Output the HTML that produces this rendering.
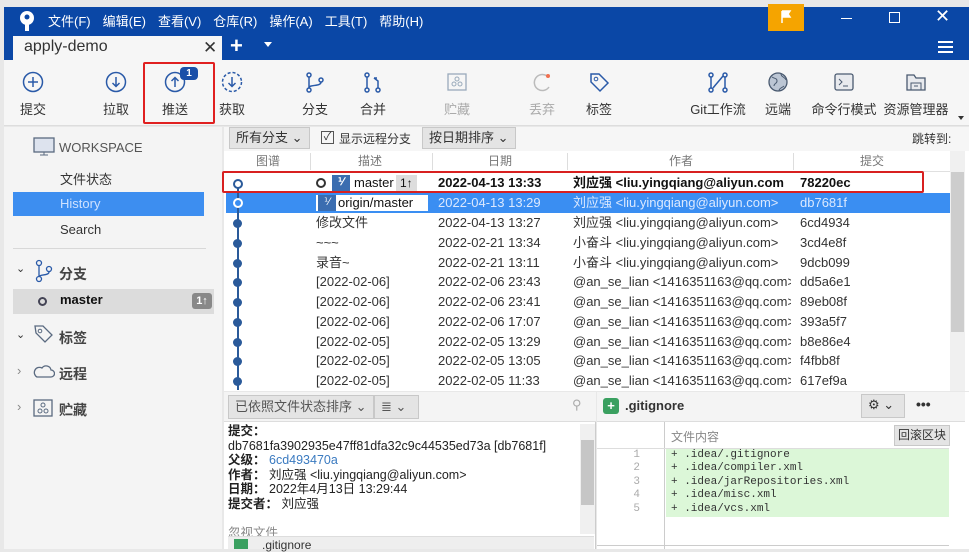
<!DOCTYPE html>
<html><head><meta charset="utf-8"><style>
*{box-sizing:border-box;margin:0;padding:0}
body{width:969px;height:549px;overflow:hidden;background:#e8e8e8;font-family:"Liberation Sans","Noto Sans CJK SC",sans-serif;font-size:13px;color:#333;position:relative}
.a{position:absolute}
.title{left:4px;top:7px;width:965px;height:53px;background:#0a47a6}
.menu span{color:#fff;font-size:13px;margin-right:12px}
.tb{left:4px;top:60px;width:965px;height:66px;background:#f6f6f6;border-bottom:1px solid #ddd}
.tool{position:absolute;top:10px;text-align:center;font-size:13px;color:#333;width:60px}
.tool svg{display:block;margin:0 auto 6px}
.side{left:4px;top:127px;width:218px;height:422px;background:#f4f4f4}
.main{left:224px;top:127px;width:745px;height:265px;background:#fff}
.row{position:absolute;left:226px;width:724px;height:20px;font-size:13px;line-height:20px;white-space:nowrap}
.row span{position:absolute}
.btn{position:absolute;background:#e4e4e4;border:1px solid #c8c8c8;height:22px;line-height:20px;padding:0 6px;font-size:13px}
.mono{font-family:"Liberation Mono",monospace;font-size:11px}
.dot{left:7px;top:6px;width:9px;height:9px;border-radius:50%;background:#2a5a9a}
</style></head><body>
<div class="a title"></div>
<svg class="a" style="left:18px;top:10px" width="18" height="22" viewBox="0 0 18 22"><circle cx="9" cy="8" r="7" fill="#fff"/><rect x="7" y="10" width="4" height="11" fill="#fff"/><circle cx="9" cy="7" r="2.5" fill="#0a47a6"/></svg>
<div class="a menu" style="left:48px;top:11px"><span>文件(F)</span><span>编辑(E)</span><span>查看(V)</span><span>仓库(R)</span><span>操作(A)</span><span>工具(T)</span><span>帮助(H)</span></div>
<div class="a" style="left:768px;top:4px;width:36px;height:27px;background:#f5a400"></div>
<svg class="a" style="left:780px;top:10px" width="12" height="14"><path d="M2 1v12M2 1h8l-2 3 2 3H2" stroke="#fff" stroke-width="1.5" fill="#fff"/></svg>
<div class="a" style="left:841px;top:18px;width:11px;height:1px;background:#fff"></div>
<div class="a" style="left:889px;top:12px;width:11px;height:11px;border:1.5px solid #fff"></div>
<div class="a" style="left:935px;top:6px;color:#fff;font-size:18px">✕</div>
<div class="a" style="left:938px;top:41px;width:15px;height:2px;background:#fff;box-shadow:0 5px #fff,0 10px #fff"></div>
<div class="a" style="left:13px;top:36px;width:209px;height:24px;background:#f6f6f6"></div>
<div class="a" style="left:24px;top:38px;font-size:16px;color:#333">apply-demo</div>
<div class="a" style="left:203px;top:38px;font-size:17px;color:#333">✕</div>
<div class="a" style="left:230px;top:33px;font-size:22px;color:#fff;font-weight:bold">+</div>
<div class="a" style="left:264px;top:42px;border:4px solid transparent;border-top:5px solid #fff"></div>
<div class="a tb"></div>
<div class="tool" style="left:3px;top:71px"><svg width="22" height="22"><circle cx="11" cy="11" r="9.5" fill="none" stroke="#2a5aa8" stroke-width="1.5"/><path d="M11 6v10M6 11h10" stroke="#2a5aa8" stroke-width="1.5"/></svg>提交</div>
<div class="tool" style="left:86px;top:71px"><svg width="22" height="22"><circle cx="11" cy="11" r="9.5" fill="none" stroke="#2a5aa8" stroke-width="1.5"/><path d="M11 6v9M7.5 12l3.5 3.5 3.5-3.5" fill="none" stroke="#2a5aa8" stroke-width="1.5"/></svg>拉取</div>
<div class="a" style="left:143px;top:62px;width:72px;height:62px;border:2px solid #e02020;border-radius:2px"></div>
<div class="tool" style="left:145px;top:71px"><svg width="22" height="22"><circle cx="11" cy="11" r="9.5" fill="none" stroke="#2a5aa8" stroke-width="1.5"/><path d="M11 16V7M7.5 10l3.5-3.5 3.5 3.5" fill="none" stroke="#2a5aa8" stroke-width="1.5"/></svg>推送</div>
<div class="a" style="left:180px;top:67px;width:18px;height:13px;background:#1a4fa8;border-radius:4px;color:#fff;font-size:10px;font-weight:bold;text-align:center;line-height:13px">1</div>
<div class="tool" style="left:202px;top:71px"><svg width="22" height="22"><circle cx="11" cy="11" r="9.5" fill="none" stroke="#2a5aa8" stroke-width="1.5" stroke-dasharray="3 2"/><path d="M11 6v9M7.5 12l3.5 3.5 3.5-3.5" fill="none" stroke="#2a5aa8" stroke-width="1.5"/></svg>获取</div>
<div class="tool" style="left:285px;top:71px"><svg width="22" height="22"><circle cx="5" cy="4" r="2" fill="none" stroke="#2a5aa8" stroke-width="1.5"/><circle cx="5" cy="19" r="2" fill="none" stroke="#2a5aa8" stroke-width="1.5"/><circle cx="17" cy="9" r="2" fill="none" stroke="#2a5aa8" stroke-width="1.5"/><path d="M5 6v11M17 11c0 5-12 2-12 6" fill="none" stroke="#2a5aa8" stroke-width="1.5"/></svg>分支</div>
<div class="tool" style="left:343px;top:71px"><svg width="22" height="22"><circle cx="5" cy="4" r="2" fill="none" stroke="#2a5aa8" stroke-width="1.5"/><circle cx="5" cy="19" r="2" fill="none" stroke="#2a5aa8" stroke-width="1.5"/><circle cx="16" cy="19" r="2" fill="none" stroke="#2a5aa8" stroke-width="1.5"/><path d="M5 6v11M16 17v-7l-4-3M12 7h3" fill="none" stroke="#2a5aa8" stroke-width="1.5"/></svg>合并</div>
<div class="tool" style="left:427px;top:71px;color:#aaa"><svg width="22" height="22"><rect x="2" y="3" width="18" height="16" fill="none" stroke="#9ab" stroke-width="1.3"/><circle cx="11" cy="8" r="2" fill="none" stroke="#9ab"/><circle cx="8" cy="13" r="2" fill="none" stroke="#9ab"/><circle cx="14" cy="13" r="2" fill="none" stroke="#9ab"/></svg>贮藏</div>
<div class="tool" style="left:512px;top:71px;color:#aaa"><svg width="22" height="22"><path d="M16 5A8 8 0 1 0 18 16" fill="none" stroke="#bbb" stroke-width="1.5"/><circle cx="17" cy="5" r="2" fill="#f07050"/></svg>丢弃</div>
<div class="tool" style="left:569px;top:71px"><svg width="22" height="22"><path d="M3 3h8l9 9-8 8-9-9z" fill="none" stroke="#2a5aa8" stroke-width="1.5"/><circle cx="8" cy="8" r="1.8" fill="none" stroke="#2a5aa8"/></svg>标签</div>
<div class="tool" style="left:683px;top:71px;width:70px"><svg width="22" height="22"><circle cx="4" cy="4" r="2" fill="none" stroke="#2a5aa8" stroke-width="1.5"/><circle cx="4" cy="19" r="2" fill="none" stroke="#2a5aa8" stroke-width="1.5"/><circle cx="18" cy="4" r="2" fill="none" stroke="#2a5aa8" stroke-width="1.5"/><circle cx="18" cy="19" r="2" fill="none" stroke="#2a5aa8" stroke-width="1.5"/><path d="M4 6v11M18 6v11M6 17C10 12 12 10 16 5" fill="none" stroke="#2a5aa8" stroke-width="1.5"/></svg>Git工作流</div>
<div class="tool" style="left:748px;top:71px"><svg width="22" height="22"><circle cx="11" cy="11" r="9" fill="#bcc6d4" stroke="#4a5a70" stroke-width="1.3"/><path d="M5 6c3 2 5 1 5 4s-3 2-3 5M14 3c0 3 4 3 5 6M12 20c0-3 3-3 5-5" fill="none" stroke="#4a5a70"/></svg>远端</div>
<div class="tool" style="left:810px;top:71px;width:68px"><svg width="22" height="22"><rect x="2" y="3" width="18" height="16" rx="2" fill="#e8eaee" stroke="#4a5a70" stroke-width="1.3"/><path d="M6 8l3 3-3 3M10 15h5" fill="none" stroke="#4a5a70"/></svg>命令行模式</div>
<div class="tool" style="left:881px;top:71px;width:70px"><svg width="22" height="22"><path d="M2 4h7l2 3h9v12H2z" fill="#e8eaee" stroke="#4a5a70" stroke-width="1.3"/><path d="M6 19v-7h10v7M9 15h4" fill="none" stroke="#4a5a70"/></svg>资源管理器</div>
<div class="a" style="left:958px;top:116px;border:3px solid transparent;border-top:4px solid #333"></div>

<div class="a side"></div>
<svg class="a" style="left:33px;top:137px" width="22" height="20"><rect x="1" y="1" width="20" height="14" fill="#dde3ee" stroke="#5a6a80" stroke-width="1.3"/><path d="M7 18h8M11 15v3" stroke="#5a6a80"/></svg>
<div class="a" style="left:59px;top:140px;font-size:13px;color:#555">WORKSPACE</div>
<div class="a" style="left:60px;top:169px">文件状态</div>
<div class="a" style="left:13px;top:192px;width:191px;height:24px;background:#3d8ef0"></div>
<div class="a" style="left:60px;top:196px;color:#cfe2ff">History</div>
<div class="a" style="left:60px;top:222px">Search</div>
<div class="a" style="left:13px;top:248px;width:193px;height:1px;background:#d8d8d8"></div>
<div class="a" style="left:16px;top:262px;font-size:11px">⌄</div>
<svg class="a" style="left:33px;top:259px" width="20" height="24"><circle cx="6" cy="4" r="2.5" fill="none" stroke="#2a5aa8" stroke-width="1.3"/><circle cx="6" cy="20" r="2.5" fill="none" stroke="#2a5aa8" stroke-width="1.3"/><circle cx="16" cy="10" r="2.5" fill="none" stroke="#2a5aa8" stroke-width="1.3"/><path d="M6 7v10M16 13c0 4-10 2-10 5" fill="none" stroke="#2a5aa8" stroke-width="1.3"/></svg>
<div class="a" style="left:59px;top:264px;font-size:14px;font-weight:bold;color:#444">分支</div>
<div class="a" style="left:13px;top:289px;width:201px;height:25px;background:#dcdcdc"></div>
<div class="a" style="left:38px;top:297px;width:9px;height:9px;border:2px solid #445;border-radius:50%"></div>
<div class="a" style="left:60px;top:292px;font-weight:bold;color:#111">master</div>
<div class="a" style="left:192px;top:293px;width:20px;height:16px;background:#888;border-radius:3px;color:#fff;font-size:11px;text-align:center;line-height:16px;font-weight:bold">1↑</div>
<div class="a" style="left:16px;top:328px;font-size:11px">⌄</div>
<svg class="a" style="left:33px;top:324px" width="22" height="22"><path d="M2 2h8l9 9-7 7-9-9z" fill="none" stroke="#5a6a80" stroke-width="1.3"/><circle cx="7" cy="7" r="1.8" fill="none" stroke="#5a6a80"/></svg>
<div class="a" style="left:59px;top:328px;font-size:14px;font-weight:bold;color:#444">标签</div>
<div class="a" style="left:17px;top:363px;color:#888;font-size:13px">›</div>
<svg class="a" style="left:33px;top:364px" width="22" height="14"><path d="M4 13h14a3 3 0 0 0 0-7 5 5 0 0 0-9-2A4 4 0 0 0 4 13z" fill="none" stroke="#5a6a80" stroke-width="1.3"/></svg>
<div class="a" style="left:59px;top:364px;font-size:14px;font-weight:bold;color:#444">远程</div>
<div class="a" style="left:17px;top:399px;color:#888;font-size:13px">›</div>
<svg class="a" style="left:33px;top:399px" width="20" height="18"><rect x="1" y="1" width="18" height="16" fill="none" stroke="#5a6a80" stroke-width="1.3"/><circle cx="10" cy="6" r="2" fill="none" stroke="#5a6a80"/><circle cx="7" cy="12" r="2" fill="none" stroke="#5a6a80"/><circle cx="13" cy="12" r="2" fill="none" stroke="#5a6a80"/></svg>
<div class="a" style="left:59px;top:400px;font-size:14px;font-weight:bold;color:#444">贮藏</div>

<div class="a" style="left:224px;top:127px;width:745px;height:24px;background:#f6f6f6"></div>
<div class="btn" style="left:229px;top:127px">所有分支 ⌄</div>
<div class="a" style="left:321px;top:131px;width:13px;height:13px;border:1px solid #555;font-size:11px;line-height:11px;text-align:center">✓</div>
<div class="a" style="left:339px;top:130px;font-size:12px">显示远程分支</div>
<div class="btn" style="left:422px;top:127px">按日期排序 ⌄</div>
<div class="a" style="left:912px;top:130px;font-size:12px">跳转到:</div>
<div class="a main" style="top:151px;height:240px"></div>
<div class="a" style="left:226px;top:151px;width:724px;height:21px;background:#fff;border-bottom:1px solid #e0e0e0;color:#777;font-size:12px;line-height:20px">
<span class="a" style="left:30px">图谱</span><span class="a" style="left:132px">描述</span><span class="a" style="left:262px">日期</span><span class="a" style="left:443px">作者</span><span class="a" style="left:634px">提交</span>
<div class="a" style="left:84px;top:2px;width:1px;height:17px;background:#ddd"></div><div class="a" style="left:206px;top:2px;width:1px;height:17px;background:#ddd"></div><div class="a" style="left:341px;top:2px;width:1px;height:17px;background:#ddd"></div><div class="a" style="left:567px;top:2px;width:1px;height:17px;background:#ddd"></div></div>
<div class="a" style="left:950px;top:151px;width:15px;height:240px;background:#f0f0f0"></div>
<div class="a" style="left:951px;top:172px;width:13px;height:160px;background:#cdcdcd"></div>
<div class="a" style="left:226px;top:193px;width:724px;height:20px;background:#3a8ef2"></div>
<div class="a" style="left:237px;top:183px;width:2px;height:207px;background:#2a5a9a"></div>
<div class="row" style="top:173px;font-weight:bold;color:#111"><span style="left:90px;width:10px;height:10px;border:2px solid #333;border-radius:50%;top:5px"></span><span style="left:106px;top:2px;width:18px;height:16px;background:#3b6db0;color:#fff;font-size:10px;line-height:16px;text-align:center">⅟</span><span style="left:128px;font-weight:normal">master</span><span style="left:170px;top:2px;height:16px;line-height:16px;padding:0 4px;background:#ddd;font-weight:normal;font-size:12px">1↑</span><span style="left:212px">2022-04-13 13:33</span><span style="left:347px">刘应强 &lt;liu.yingqiang@aliyun.com</span><span style="left:574px">78220ec</span></div>
<div class="row" style="top:193px;color:#dbe9ff"><span style="left:90px;top:2px;width:112px;height:16px;background:#fff"></span><span style="left:92px;top:2px;width:18px;height:16px;background:#3b6db0;color:#fff;font-size:10px;line-height:16px;text-align:center">⅟</span><span style="left:112px;color:#111">origin/master</span><span style="left:212px">2022-04-13 13:29</span><span style="left:347px">刘应强 &lt;liu.yingqiang@aliyun.com&gt;</span><span style="left:574px">db7681f</span></div>
<div class="a" style="left:222px;top:171px;width:702px;height:22px;border:2px solid #d82020;border-radius:2px"></div>
<div class="a" style="left:233px;top:179px;width:10px;height:10px;border:2px solid #2a5a9a;border-radius:50%;background:#fff"></div>
<div class="a" style="left:233px;top:198px;width:10px;height:10px;border:2px solid #fff;border-radius:50%;background:#3a8ef2"></div>
<div class="row" style="top:213px"><span class="dot"></span><span style="left:90px">修改文件</span><span style="left:212px">2022-04-13 13:27</span><span style="left:347px">刘应强 &lt;liu.yingqiang@aliyun.com&gt;</span><span style="left:574px">6cd4934</span></div>
<div class="row" style="top:233px"><span class="dot"></span><span style="left:90px">~~~</span><span style="left:212px">2022-02-21 13:34</span><span style="left:347px">小奋斗 &lt;liu.yingqiang@aliyun.com&gt;</span><span style="left:574px">3cd4e8f</span></div>
<div class="row" style="top:253px"><span class="dot"></span><span style="left:90px">录音~</span><span style="left:212px">2022-02-21 13:11</span><span style="left:347px">小奋斗 &lt;liu.yingqiang@aliyun.com&gt;</span><span style="left:574px">9dcb099</span></div>
<div class="row" style="top:272px"><span class="dot"></span><span style="left:90px">[2022-02-06]</span><span style="left:212px">2022-02-06 23:43</span><span style="left:347px;width:218px;overflow:hidden">@an_se_lian &lt;1416351163@qq.com&gt;</span><span style="left:574px">dd5a6e1</span></div>
<div class="row" style="top:292px"><span class="dot"></span><span style="left:90px">[2022-02-06]</span><span style="left:212px">2022-02-06 23:41</span><span style="left:347px;width:218px;overflow:hidden">@an_se_lian &lt;1416351163@qq.com&gt;</span><span style="left:574px">89eb08f</span></div>
<div class="row" style="top:312px"><span class="dot"></span><span style="left:90px">[2022-02-06]</span><span style="left:212px">2022-02-06 17:07</span><span style="left:347px;width:218px;overflow:hidden">@an_se_lian &lt;1416351163@qq.com&gt;</span><span style="left:574px">393a5f7</span></div>
<div class="row" style="top:332px"><span class="dot"></span><span style="left:90px">[2022-02-05]</span><span style="left:212px">2022-02-05 13:29</span><span style="left:347px;width:218px;overflow:hidden">@an_se_lian &lt;1416351163@qq.com&gt;</span><span style="left:574px">b8e86e4</span></div>
<div class="row" style="top:351px"><span class="dot"></span><span style="left:90px">[2022-02-05]</span><span style="left:212px">2022-02-05 13:05</span><span style="left:347px;width:218px;overflow:hidden">@an_se_lian &lt;1416351163@qq.com&gt;</span><span style="left:574px">f4fbb8f</span></div>
<div class="row" style="top:371px"><span class="dot"></span><span style="left:90px">[2022-02-05]</span><span style="left:212px">2022-02-05 11:33</span><span style="left:347px;width:218px;overflow:hidden">@an_se_lian &lt;1416351163@qq.com&gt;</span><span style="left:574px">617ef9a</span></div>

<div class="a" style="left:224px;top:392px;width:372px;height:157px;background:#fff;border-right:1px solid #ccc"></div>
<div class="a" style="left:224px;top:392px;width:372px;height:30px;background:#f4f4f4;border-bottom:1px solid #ddd"></div>
<div class="btn" style="left:228px;top:395px;height:24px;line-height:22px;color:#555">已依照文件状态排序 ⌄</div>
<div class="btn" style="left:374px;top:395px;height:24px;line-height:22px;color:#555;width:45px">≣ ⌄</div>
<div class="a" style="left:572px;top:397px;color:#aaa;font-size:13px">⚲</div>
<div class="a" style="left:228px;top:424px;font-size:12.5px;line-height:14.6px;color:#222;white-space:nowrap">
<b>提交：</b><br>db7681fa3902935e47ff81dfa32c9c44535ed73a [db7681f]<br>
<b>父级：</b> <span style="color:#3a7ac0">6cd493470a</span><br><b>作者：</b> 刘应强 &lt;liu.yingqiang@aliyun.com&gt;<br><b>日期：</b> 2022年4月13日 13:29:44<br><b>提交者：</b> 刘应强<br><br><span style="color:#888">忽视文件</span></div>
<div class="a" style="left:580px;top:424px;width:15px;height:110px;background:#f0f0f0"></div>
<div class="a" style="left:581px;top:440px;width:13px;height:65px;background:#c6c6c6"></div>
<div class="a" style="left:228px;top:536px;width:366px;height:13px;background:#eee;border-top:1px solid #ddd"></div>
<div class="a" style="left:234px;top:539px;width:14px;height:10px;background:#3aa060"></div>
<div class="a" style="left:262px;top:538px;font-size:12px">.gitignore</div>

<div class="a" style="left:597px;top:392px;width:372px;height:157px;background:#fff"></div>
<div class="a" style="left:597px;top:392px;width:368px;height:30px;background:#f4f4f4;border-bottom:1px solid #ddd"></div>
<div class="a" style="left:603px;top:398px;width:16px;height:16px;background:#3aa060;border-radius:3px;color:#fff;font-weight:bold;text-align:center;line-height:16px">+</div>
<div class="a" style="left:625px;top:398px;font-weight:bold;font-size:13px">.gitignore</div>
<div class="btn" style="left:861px;top:394px;width:44px;height:24px">⚙ ⌄</div>
<div class="a" style="left:916px;top:396px;font-weight:bold;font-size:14px">•••</div>
<div class="a" style="left:664px;top:422px;width:1px;height:127px;background:#ccc"></div>
<div class="a" style="left:597px;top:448px;width:352px;height:1px;background:#ddd"></div>
<div class="a" style="left:671px;top:428px;font-size:12px;color:#888">文件内容</div>
<div class="btn" style="left:894px;top:425px;height:21px;line-height:19px;font-size:12px;padding:0 3px">回滚区块</div>
<div class="a" style="left:666px;top:449px;width:283px;height:68px;background:#dcf7d8"></div>
<div class="a mono" style="left:630px;top:449px;color:#aaa;line-height:13.4px;text-align:right;width:10px">1<br>2<br>3<br>4<br>5</div>
<div class="a mono" style="left:671px;top:449px;line-height:13.4px;color:#333">+ .idea/.gitignore<br>+ .idea/compiler.xml<br>+ .idea/jarRepositories.xml<br>+ .idea/misc.xml<br>+ .idea/vcs.xml</div>
<div class="a" style="left:597px;top:545px;width:352px;height:1px;background:#ccc"></div>
</body></html>
